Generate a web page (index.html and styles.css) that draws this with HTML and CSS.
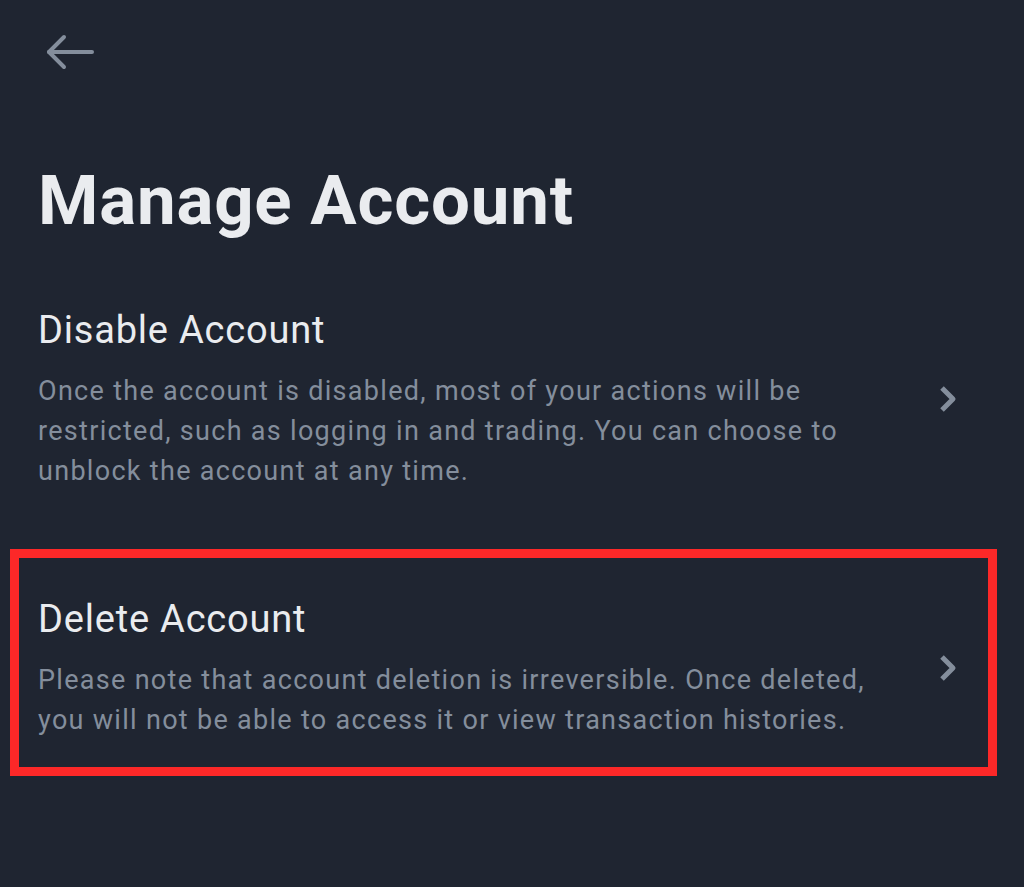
FILE: index.html
```html
<!DOCTYPE html>
<html lang="en">
<head>
  <meta charset="UTF-8" />
  <meta name="viewport" content="width=device-width, initial-scale=1.0"/>
  <title>Manage Account</title>
  <link rel="stylesheet" href="styles.css">
</head>
<body>
  <div class="page">
    <a class="back" href="#" aria-label="Back">
      <svg width="48" height="36" viewBox="0 0 48 36" fill="none" stroke="#848e9c" stroke-width="4" stroke-linecap="round" stroke-linejoin="round">
        <path d="M46 18H3" />
        <path d="M18 3L3 18L18 33" />
      </svg>
    </a>

    <h1>Manage Account</h1>

    <div class="menu">
      <a class="row" href="#">
        <div class="row-text">
          <div class="row-title">Disable Account</div>
          <p class="row-desc">Once the account is disabled, most of your actions will be restricted, such as logging in and trading. You can choose to unblock the account at any time.</p>
        </div>
        <svg class="chevron" width="20" height="28" viewBox="0 0 20 28" fill="none" stroke="#848e9c" stroke-width="5" stroke-linejoin="round">
          <path d="M4 3L15 14L4 25" />
        </svg>
      </a>

      <a class="row highlight" href="#">
        <div class="row-text">
          <div class="row-title">Delete Account</div>
          <p class="row-desc">Please note that account deletion is irreversible. Once deleted, you will not be able to access it or view transaction histories.</p>
        </div>
        <svg class="chevron" width="20" height="28" viewBox="0 0 20 28" fill="none" stroke="#848e9c" stroke-width="5" stroke-linejoin="round">
          <path d="M4 3L15 14L4 25" />
        </svg>
      </a>
    </div>
  </div>
</body>
</html>
```

FILE: styles.css
```css
body {
  margin: 0;
  background: #1f2531;
  font-family: Roboto, "Noto Sans", sans-serif;
  color: #eaecef;
}

.page {
  min-height: 887px;
  box-sizing: border-box;
  padding: 34px 66px 0 38px;
}

.back {
  display: block;
  width: 48px;
  height: 36px;
  margin-left: 8px;
}

.back svg {
  display: block;
}

h1 {
  margin: 91px 0 0;
  font-size: 69px;
  line-height: 80px;
  font-weight: 700;
  letter-spacing: 0.8px;
  color: #eaecef;
}

.menu {
  margin-top: 66px;
}

.row {
  display: flex;
  align-items: center;
  gap: 20px;
  color: inherit;
  text-decoration: none;
}

.row-text {
  flex: 1;
}

.row-title {
  font-size: 38px;
  line-height: 46px;
  letter-spacing: 0.8px;
  color: #eaecef;
}

.row-desc {
  margin: 18px 0 0;
  font-size: 27px;
  line-height: 40px;
  letter-spacing: 1.3px;
  color: #848e9c;
}

.chevron {
  flex-shrink: 0;
  display: block;
}

.highlight {
  margin: 58px -39px 0 -28px;
  padding: 38px 30px 27px 19px;
  border: 9px solid #fc2828;
}
```
